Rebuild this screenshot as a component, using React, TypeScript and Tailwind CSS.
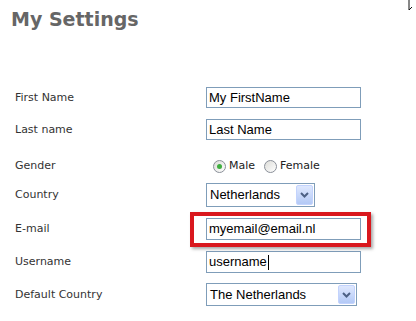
import React from "react";

const labelCls = "w-[206px] shrink-0 pl-[15px] pt-[1px] text-[11px] text-[#333] font-['DejaVu_Sans',Verdana,sans-serif]";
const boxText = "font-['Liberation_Sans',Arial,sans-serif] text-[13px] text-black";

function TextBox({ value, w = 155, h = 21, caret = false }: { value: string; w?: number; h?: number; caret?: boolean }) {
  return (
    <div
      className={`flex items-center border border-[#7f9db9] bg-white pl-[2px] ${boxText}`}
      style={{ width: w, height: h }}
    >
      <span>{value}</span>
      {caret && <span className="ml-[1px] inline-block h-[15px] w-[1px] bg-black" />}
    </div>
  );
}

function Select({ value, w, h }: { value: string; w: number; h: number }) {
  return (
    <div
      className={`flex items-center justify-between border border-[#7f9db9] bg-white pl-[3px] pr-[1px] ${boxText}`}
      style={{ width: w, height: h }}
    >
      <span>{value}</span>
      <div className="flex h-[calc(100%-2px)] w-[17px] items-center justify-center rounded-[2px] border border-[#c3d3fd] bg-gradient-to-b from-[#dfe8fe] to-[#b3c9f6]">
        <svg width="9" height="6" viewBox="0 0 9 6">
          <path d="M1 1 L4.5 4.5 L8 1" fill="none" stroke="#4d6185" strokeWidth="2" />
        </svg>
      </div>
    </div>
  );
}

function Radio({ checked }: { checked?: boolean }) {
  return (
    <span className="relative inline-flex h-[13px] w-[13px] items-center justify-center rounded-full border border-[#8a8f99] bg-gradient-to-br from-[#dcdcd8] to-white">
      {checked && <span className="h-[5px] w-[5px] rounded-full bg-[#3fae3f]" />}
    </span>
  );
}

export default function App() {
  return (
    <div className="relative h-[321px] w-[416px] overflow-hidden bg-white">
      <svg className="absolute right-[2px] top-0" width="6" height="12" viewBox="0 0 6 12">
        <path d="M1 0 V10 L4 7" fill="none" stroke="#111" strokeWidth="1" />
      </svg>
      <h1 className="pl-[11px] pt-[8px] text-[19px] font-bold leading-[23px] text-[#666] font-['DejaVu_Sans',Verdana,sans-serif]">
        My Settings
      </h1>
      <div className="mt-[56px] flex flex-col">
        <div className="flex h-[21px] items-center">
          <div className={labelCls}>First Name</div>
          <TextBox value="My FirstName" />
        </div>
        <div className="mt-[11px] flex h-[21px] items-center">
          <div className={labelCls}>Last name</div>
          <TextBox value="Last Name" />
        </div>
        <div className="mt-[18px] flex h-[15px] items-center">
          <div className={labelCls}>Gender</div>
          <div className="flex items-center pl-[7px] pt-[1px] text-[11px] text-[#222] font-['DejaVu_Sans',Verdana,sans-serif]">
            <Radio checked />
            <span className="ml-[3px]">Male</span>
            <span className="ml-[9px] flex"><Radio /></span>
            <span className="ml-[3px]">Female</span>
          </div>
        </div>
        <div className="mt-[10px] flex h-[24px] items-center">
          <div className={labelCls}>Country</div>
          <Select value="Netherlands" w={109} h={24} />
        </div>
        <div className="mt-[11px] flex h-[22px] items-center">
          <div className={labelCls}>E-mail</div>
          <div className="relative">
            <TextBox value="myemail@email.nl" h={22} />
            <div className="absolute left-[-16px] top-[-6px] h-[35px] w-[181px] border-[4px] border-[#d9181e] shadow-[2px_2px_3px_rgba(0,0,0,0.35)]" />
          </div>
        </div>
        <div className="mt-[11px] flex h-[22px] items-center">
          <div className={labelCls}>Username</div>
          <TextBox value="username" h={22} caret />
        </div>
        <div className="mt-[10px] flex h-[23px] items-center">
          <div className={labelCls}>Default Country</div>
          <Select value="The Netherlands" w={151} h={23} />
        </div>
      </div>
    </div>
  );
}
